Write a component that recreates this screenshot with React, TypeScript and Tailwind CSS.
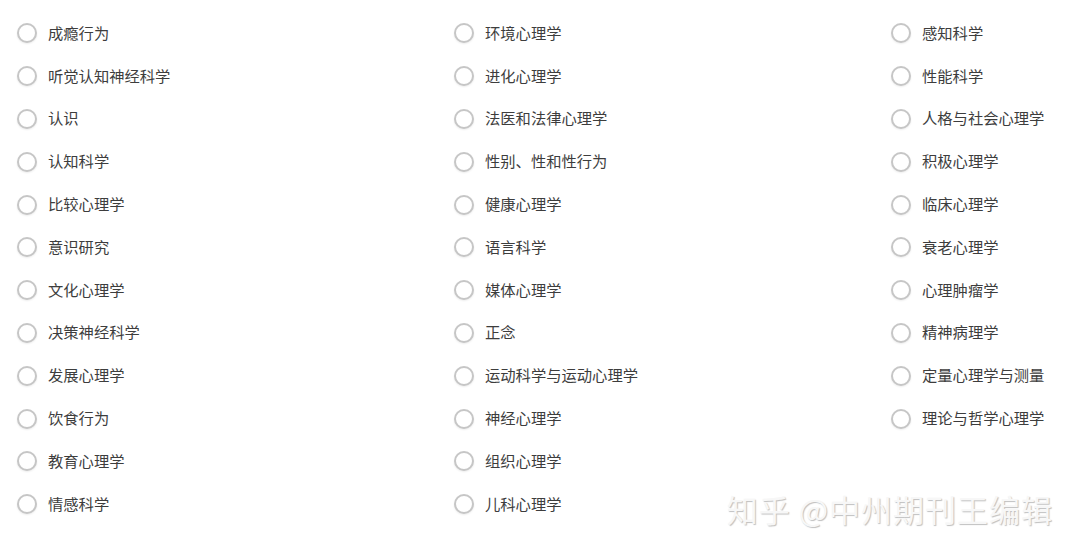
import React from "react";

const cols: string[][] = [
  ["成瘾行为", "听觉认知神经科学", "认识", "认知科学", "比较心理学", "意识研究", "文化心理学", "决策神经科学", "发展心理学", "饮食行为", "教育心理学", "情感科学"],
  ["环境心理学", "进化心理学", "法医和法律心理学", "性别、性和性行为", "健康心理学", "语言科学", "媒体心理学", "正念", "运动科学与运动心理学", "神经心理学", "组织心理学", "儿科心理学"],
  ["感知科学", "性能科学", "人格与社会心理学", "积极心理学", "临床心理学", "衰老心理学", "心理肿瘤学", "精神病理学", "定量心理学与测量", "理论与哲学心理学"],
];

function Item({ label }: { label: string }) {
  return (
    <div className="flex h-[42.8px] items-center">
      <span className="block h-[20px] w-[20px] shrink-0 rounded-full border-2 border-[#c6c6c6] bg-white shadow-[0_1px_2px_rgba(0,0,0,0.08)]" />
      <span className="ml-[11px] -translate-y-[1px] text-[15.3px] leading-none text-[#3d3d3d]">{label}</span>
    </div>
  );
}

export default function App() {
  return (
    <div
      className="relative h-[556px] w-[1080px] overflow-hidden bg-white"
      style={{ fontFamily: '"Noto Sans CJK SC", "Noto Sans", sans-serif' }}
    >
      <div className="grid grid-cols-[437px_437px_1fr] pl-[17px] pt-[12px]">
        {cols.map((c, i) => (
          <div key={i} className="flex flex-col">
            {c.map((l) => (
              <Item key={l} label={l} />
            ))}
          </div>
        ))}
      </div>
      <div className="absolute right-[27px] top-[493px] text-[31px] leading-none tracking-[1px] text-[#f7f7f7] [text-shadow:1px_1px_1px_rgba(0,0,0,0.25),-1px_-1px_0_rgba(255,255,255,0.9)]">
        知乎 @中州期刊王编辑
      </div>
    </div>
  );
}
